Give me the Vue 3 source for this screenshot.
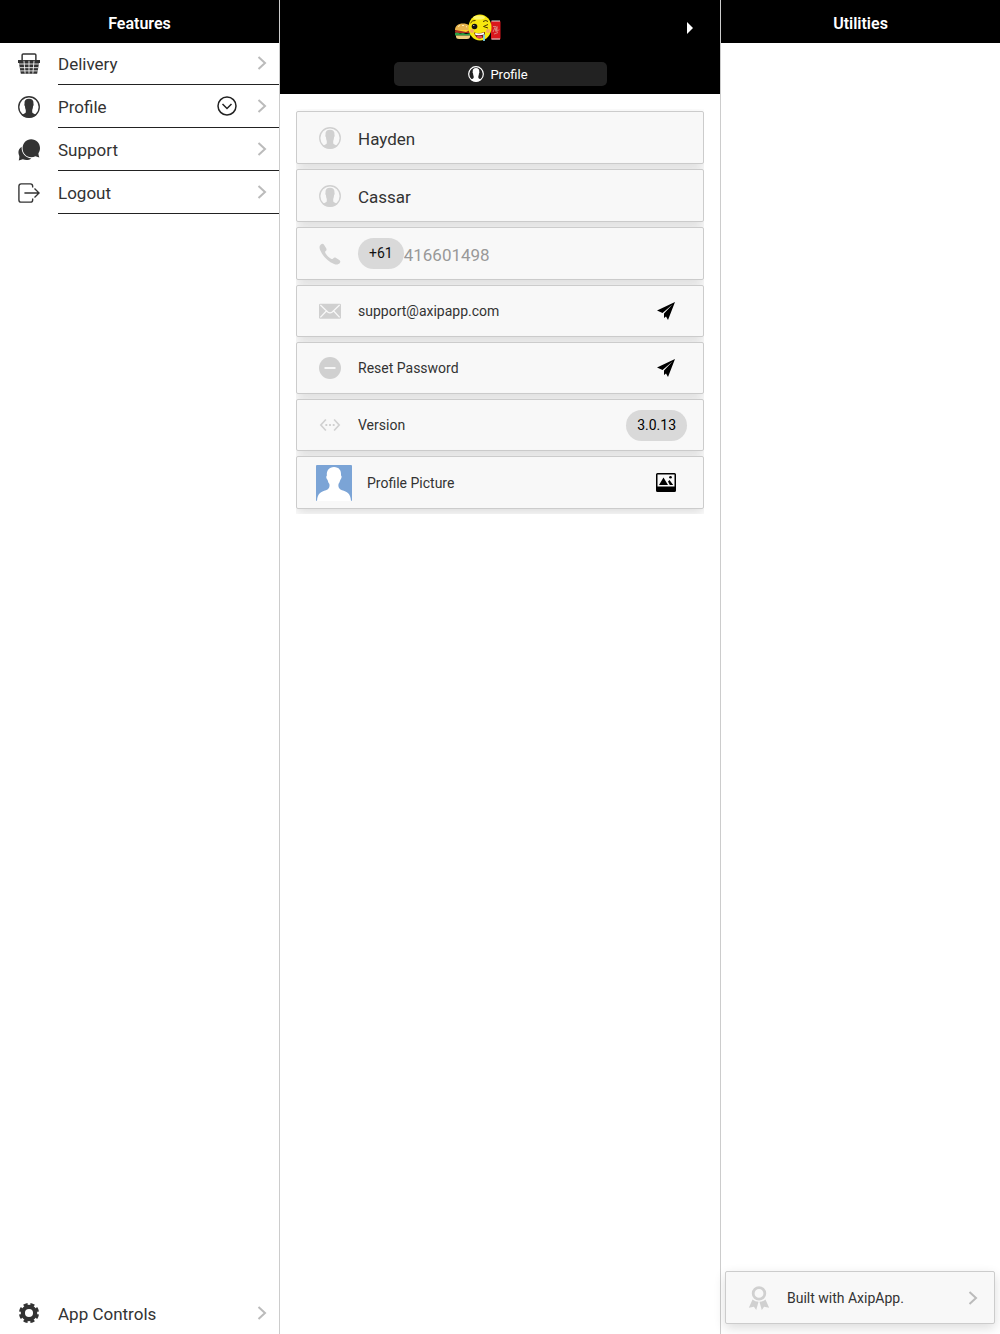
<template>
  <div class="app">
    <!-- Features -->
    <nav class="panel panel-left">
      <h2 class="panel-head">Features</h2>
      <ul class="menu">
        <li v-for="item in features" :key="item.name" class="menu-item">
          <svg class="menu-icon" viewBox="0 0 24 24" aria-hidden="true">
            <g v-if="item.icon === 'basket'">
              <path d="M4.500 8V2.200Q4.500 1 5.700 1H18.300Q19.500 1 19.500 2.200V8" fill="none" stroke="currentColor" stroke-width="1.600" />
              <path d="M0 7.500h24v3.300h-1L20.900 22.500H3.100L1 10.800H0z" fill="currentColor" />
              <path d="M1 12h22M2 16h20M2.500 19.500h19" fill="none" stroke="#fff" stroke-width=".9" />
              <path d="M6.500 8.500l1.300 14M12 8.500v14M17.500 8.500l-1.300 14" fill="none" stroke="#fff" stroke-width=".9" />
            </g>
            <g v-else-if="item.icon === 'person'">
              <circle cx="12" cy="12" r="11.200" fill="none" stroke="currentColor" stroke-width="1.500" />
              <path :d="personPath" fill="currentColor" />
            </g>
            <g v-else-if="item.icon === 'chat'" fill="currentColor">
              <path d="M4 8.500C.3 11 -.3 14.500 1.300 18.200c.3.800.2 2.700-.5 5.300l4.500-1.400c3.300 1.400 6.700 1 9.200-.9C8 20.500 3.500 15.500 4 8.500z" />
              <path d="M14.300.3c5.500 0 9.700 4.200 9.700 9.400 0 2.100-.6 3.900-1.600 5.500-.3 1 .1 2.600.9 5l-4.300-1.300c-1.300.6-2.900 1-4.700 1-5.300 0-9.300-4.400-9.300-9.800C5 4.600 9.100.3 14.300.3z" />
            </g>
            <g v-else fill="none" stroke="currentColor" stroke-width="1.500">
              <path d="M16 6V4.500Q16 2 13.500 2H3.500Q1 2 1 4.500v15Q1 22 3.500 22h10q2.500 0 2.500-2.500V18" />
              <path d="M7 12h16M18 7l5 5-5 5" />
            </g>
          </svg>
          <div class="menu-body">
            <a href="#" class="menu-link">{{ item.name }}</a>
            <button v-if="item.expand" class="icon-btn" aria-label="Expand">
              <svg class="expand-icon" viewBox="0 0 20 20">
                <circle cx="10" cy="10" r="9" />
                <path d="M5.500 8l4.500 4.500L14.500 8" />
              </svg>
            </button>
            <svg class="chevron" viewBox="0 0 10 14"><path d="M1.500 1l6.500 6-6.500 6" /></svg>
          </div>
        </li>
      </ul>
      <div class="menu-item controls">
        <svg class="menu-icon" viewBox="0 0 24 24" aria-hidden="true">
          <circle cx="12" cy="12" r="6.700" fill="none" stroke="currentColor" stroke-width="4.600" />
          <!-- gear teeth -->
          <circle
            cx="12"
            cy="12"
            r="9.500"
            fill="none"
            stroke="currentColor"
            stroke-width="3"
            pathLength="80"
            stroke-dasharray="6 4"
            stroke-dashoffset="-2"
          />
        </svg>
        <div class="menu-body">
          <a href="#" class="menu-link">App Controls</a>
          <svg class="chevron" viewBox="0 0 10 14"><path d="M1.500 1l6.500 6-6.500 6" /></svg>
        </div>
      </div>
    </nav>

    <!-- Profile -->
    <main class="center">
      <header class="top">
        <div class="top-bar">
          <svg class="logo" viewBox="0 0 48 28" aria-hidden="true">
            <!-- burger -->
            <path d="M1 16c0-4 3-6.500 8-6.500s8 2.500 8 6.500z" fill="#e9b44e" />
            <path d="M4 12.500l2-1M8 11.500h2M12 13l1-.5" stroke="#fff0b5" stroke-width="1" />
            <rect x="1" y="16" width="16" height="3" rx="1" fill="#a92e20" />
            <path d="M2 16h14l-4 2z" fill="#ffd12e" />
            <path d="M1 19l2-.5 3 1 3-.5 3 1 5-1v2.500H1z" fill="#2da044" />
            <path d="M2 21.500h14v1q0 2.500-3 2.500H5q-3 0-3-2.500z" fill="#f0cd7c" />
            <!-- can -->
            <rect x="37" y="7" width="9.500" height="18.500" rx="1" fill="#da171d" />
            <path d="M37.500 7h8.500M37.500 25h8.500" stroke="#ddd" stroke-width="1" />
            <path d="M39 18l2-4.500 1 4 1-5v5l2-2M39 12.500h3M40 20l4-1.500" stroke="#dd9a90" stroke-width=".8" fill="none" />
            <!-- face -->
            <ellipse cx="26" cy="13.500" rx="11.500" ry="13" fill="#f7e70f" />
            <ellipse cx="25" cy="3.500" rx="6" ry="2" fill="#fff66b" />
            <circle cx="20.500" cy="12.500" r="2.800" fill="#111" />
            <circle cx="19.800" cy="11.500" r=".6" fill="#fff" />
            <path d="M16.500 9q2-3 5-2.500M29 7.500q3-2 5 0M34 10.500l-4.500 2 4.500 1.500" stroke="#493500" stroke-width="1" fill="none" />
            <circle cx="18" cy="17" r="2" fill="#f6a960" />
            <circle cx="34" cy="17" r="2" fill="#f6a960" />
            <path d="M20 18.500q5.500 1.500 11-.5 0 6.500-5 6.500-4.500 0-6-6z" fill="#761712" />
            <path d="M21 19q5 1 9-.5v2q-4 1-8.500.5z" fill="#fff" />
            <ellipse cx="25.500" cy="23" rx="3" ry="1.300" fill="#e94955" />
            <path d="M30 20.500v6.500" stroke="#78d1e7" stroke-width="1.800" />
          </svg>
          <button class="icon-btn next" aria-label="Next">
            <svg width="6" height="12" viewBox="0 0 6 12"><path d="M0 0l6 6-6 6z" fill="#fff" /></svg>
          </button>
        </div>
        <button class="tab">
          <svg class="tab-icon" viewBox="0 0 24 24" aria-hidden="true">
            <circle cx="12" cy="12" r="11" fill="none" stroke="currentColor" stroke-width="1.800" />
            <path :d="personPath" fill="currentColor" />
          </svg>
          Profile
        </button>
      </header>

      <div class="cards">
        <label v-for="f in names" :key="f.id" class="card tall">
          <svg class="card-icon" viewBox="0 0 24 24" aria-hidden="true">
            <circle cx="12" cy="12" r="11.200" fill="none" stroke="currentColor" stroke-width="1.500" />
            <path :d="personPath" fill="currentColor" />
          </svg>
          <input v-model="f.value" class="text-input" type="text" :aria-label="f.id" />
        </label>

        <label class="card tall">
          <svg class="card-icon" viewBox="0 0 24 24" aria-hidden="true">
            <path
              fill="currentColor"
              d="M2 1.500C3 .7 4.500.6 5.300 1.500L8 6c.5 1 .2 2-.7 2.800-.9.700-.8 1.400-.2 2.400 1.700 2.700 3.500 4.500 6 6 .900.500 1.600.500 2.300-.3.900-1 1.900-1.300 2.900-.7l4.200 2.600c1 .8.9 2 .2 3-1.500 1.800-3.700 2-6.200 1C9.300 20 4 14.500 1.200 7.700.2 5.200.3 3 2 1.500z"
            />
          </svg>
          <span class="pill">+61</span>
          <input v-model="phone" class="text-input phone" type="tel" aria-label="Phone" />
        </label>

        <div class="card">
          <svg class="card-icon" viewBox="0 0 24 24" aria-hidden="true">
            <rect y="4" width="24" height="16.500" rx="1.500" fill="currentColor" />
            <path d="M1.500 5.500l8 7.500q2.500 2 5 0l8-7.500M1.500 19l6.500-7M22.500 19l-6.500-7" fill="none" stroke="#f8f8f8" stroke-width="1.400" />
          </svg>
          <span class="card-text">support@axipapp.com</span>
          <button class="icon-btn action" aria-label="Send email">
            <svg width="18" height="18" viewBox="0 0 18 18"><path :d="planePath" /></svg>
          </button>
        </div>

        <div class="card">
          <svg class="card-icon" viewBox="0 0 24 24" aria-hidden="true">
            <circle cx="12" cy="12" r="12" fill="currentColor" />
            <path d="M6 12h12" stroke="#fff" stroke-width="1.800" />
          </svg>
          <span class="card-text">Reset Password</span>
          <button class="icon-btn action" aria-label="Reset">
            <svg width="18" height="18" viewBox="0 0 18 18"><path :d="planePath" /></svg>
          </button>
        </div>

        <div class="card">
          <svg class="card-icon" viewBox="0 0 24 24" aria-hidden="true">
            <path d="M7.500 6L2 12l5.500 6M16.500 6l5.500 6-5.500 6" fill="none" stroke="currentColor" stroke-width="1.800" />
            <path d="M7 11h2v2H7zM11 11h2v2h-2zM15 11h2v2h-2z" fill="currentColor" />
          </svg>
          <span class="card-text">Version</span>
          <span class="pill version">3.0.13</span>
        </div>

        <div class="card tall picture">
          <svg class="avatar" viewBox="0 0 36 36" aria-hidden="true">
            <rect width="36" height="36" rx="1" fill="#7ba4d6" />
            <path
              fill="#fff"
              d="M18 2c5 0 7.500 3.500 7 8.500 1 .3.800 2.800-.7 4.500-.5 2-1.300 3-1.800 4-.6 3 .5 5 3.500 6.300 5 1.700 8.500 2.700 9 10.700H1c.5-8 4-9 9-10.700 3-1.300 4-3.300 3.400-6.300-.7-1-1.400-2-1.800-4-1.500-1.500-1.700-4-.7-4.500C10.300 6 13 2 18 2z"
            />
          </svg>
          <span class="card-text">Profile Picture</span>
          <button class="icon-btn action" aria-label="Choose picture">
            <svg width="20" height="19" viewBox="0 0 20 19">
              <path fill-rule="evenodd" d="M1.500 0h17Q20 0 20 1.500v16q0 1.500-1.500 1.500h-17Q0 19 0 17.500v-16Q0 0 1.500 0zM1.500 1.500v12h17v-12z" />
              <path d="M3 12L7.500 4.500 12 12zM12 8.500l1.500-1.500 3.700 5h-3.400z" />
              <circle cx="14.500" cy="4.200" r="1.300" />
            </svg>
          </button>
        </div>
      </div>
    </main>

    <!-- Utilities -->
    <aside class="panel panel-right">
      <h2 class="panel-head">Utilities</h2>
      <a href="#" class="card tall built">
        <svg class="card-icon ribbon" viewBox="0 0 22 26" aria-hidden="true">
          <circle cx="11" cy="8" r="6.300" fill="none" stroke="currentColor" stroke-width="3" />
          <path d="M4 14.500q3 2.500 6.500 2.500L8 26l-2.500-3.500L0 23.500zM18 14.500q-3 2.500-6.500 2.500L14 26l2.500-3.500 5.500 1z" fill="currentColor" />
        </svg>
        <span class="card-text">Built with AxipApp.</span>
        <svg class="chevron" viewBox="0 0 10 14"><path d="M1.500 1l6.500 6-6.500 6" /></svg>
      </a>
    </aside>
  </div>
</template>

<script setup>
import { reactive, ref } from 'vue'

const features = [
  { name: 'Delivery', icon: 'basket' },
  { name: 'Profile', icon: 'person', expand: true },
  { name: 'Support', icon: 'chat' },
  { name: 'Logout', icon: 'logout' }
]

const names = reactive([
  { id: 'First name', value: 'Hayden' },
  { id: 'Last name', value: 'Cassar' }
])
const phone = ref('416601498')

// shared icon shapes
const personPath =
  'M12 3c3.500 0 5.200 1.800 4.900 5.500.3.500.2 2-.5 2.700-.1 2-.5 3-.9 4v2.500c.3 1.300 2 1.600 4.800 3C18 22.500 15.500 23.500 12 23.500S6 22.500 3.700 20.700c2.800-1.400 4.500-1.700 4.800-3v-2.500c-.4-1-.8-2-.9-4-.7-.7-.8-2.200-.5-2.700C6.800 4.800 8.500 3 12 3z'
const planePath = 'M18 0L0 8.500l5.500 2.500L15.500 2.500 7 11.500v4.500l2-1.500 2 3.500z'
</script>

<style>
body {
  margin: 0;
  background: #fff;
}
</style>

<style scoped>
.app,
.app * {
  box-sizing: border-box;
}

.app {
  display: grid;
  grid-template-columns: 28fr 44fr 28fr;
  min-height: 100vh;
  font-family: Roboto, "Liberation Sans", sans-serif;
  font-size: 17px;
  color: #333;
}

/* side panels */
.panel {
  display: flex;
  flex-direction: column;
  min-width: 0;
}
.panel-left { border-right: 1px solid #ccc; }
.panel-right { border-left: 1px solid #ccc; }

.panel-head {
  margin: 0;
  height: 42px;
  line-height: 47px;
  background: #000;
  box-shadow: 0 1px 0 #000;
  color: #fff;
  font-size: 16px;
  font-weight: 600;
  text-align: center;
}

.menu {
  list-style: none;
  margin: 0;
  padding: 0;
}
.menu-item {
  display: flex;
  align-items: center;
  height: 43px;
  padding-left: 18px;
}
.menu-icon {
  width: 22px;
  height: 22px;
  margin-right: 18px;
  flex: none;
}
.menu-body {
  flex: 1;
  display: flex;
  align-items: center;
  height: 43px;
  padding-right: 12px;
  border-bottom: 1px solid #222;
}
.menu-link {
  flex: 1;
  padding-top: 2px;
  color: inherit;
  text-decoration: none;
}
.controls { margin-top: auto; }
.controls .menu-body { border-bottom: none; }

.icon-btn {
  display: flex;
  align-items: center;
  justify-content: center;
  padding: 0;
  border: none;
  background: transparent;
  color: #000;
  cursor: pointer;
}
.expand-icon {
  width: 20px;
  height: 20px;
  margin-right: 20px;
  fill: none;
  stroke: #222;
  stroke-width: 1.5;
}
.chevron {
  width: 10px;
  height: 14px;
  flex: none;
  fill: none;
  stroke: #bbb;
  stroke-width: 2;
}

/* center header */
.center { min-width: 0; }
.top {
  height: 94px;
  background: #000;
}
.top-bar {
  display: flex;
  align-items: center;
  height: 56px;
}
.logo {
  width: 48px;
  height: 28px;
  margin: 0 auto;
}
.next {
  width: 45px;
  height: 44px;
  padding-right: 15px;
}
.tab {
  display: flex;
  align-items: center;
  justify-content: center;
  gap: 6px;
  width: 213px;
  height: 24px;
  margin: 6px auto 0;
  padding: 0 4px 0 0;
  border: none;
  border-radius: 5px;
  background: #222;
  color: #fff;
  font-family: inherit;
  font-size: 13px;
}
.tab-icon {
  width: 16px;
  height: 16px;
}

/* cards */
.cards {
  display: flex;
  flex-direction: column;
  gap: 5px;
  margin: 15px 16px 0;
  padding: 2px 0 5px;
  overflow: hidden;
}
.card {
  display: flex;
  align-items: center;
  height: 52px;
  padding: 0 16px 0 22px;
  border: 1px solid #ccc;
  border-radius: 2px;
  background: #f8f8f8;
  box-shadow: 0 4px 12px rgba(0, 0, 0, 0.14);
  color: #333;
  font-size: 14px;
}
.tall { height: 53px; }
.card-icon {
  width: 22px;
  height: 22px;
  margin-right: 17px;
  flex: none;
  color: #d0d0d0;
}
.card-text { flex: 1; }
.text-input {
  flex: 1;
  min-width: 0;
  padding: 2px 0 0;
  border: none;
  outline: none;
  background: transparent;
  color: #333;
  font-family: inherit;
  font-size: 17px;
}
.phone { color: #999; }
.pill {
  padding: 0 11px;
  border-radius: 16px;
  background: #d9d9d9;
  color: #111;
  font-size: 14px;
  line-height: 31px;
}
.version { color: #000; }
.action {
  width: 42px;
  height: 40px;
}
.picture { padding-left: 19px; }
.avatar {
  width: 36px;
  height: 36px;
  margin-right: 15px;
}

.built {
  margin: auto 5px 10px 4px;
  text-decoration: none;
}
.ribbon { height: 24px; }
</style>
